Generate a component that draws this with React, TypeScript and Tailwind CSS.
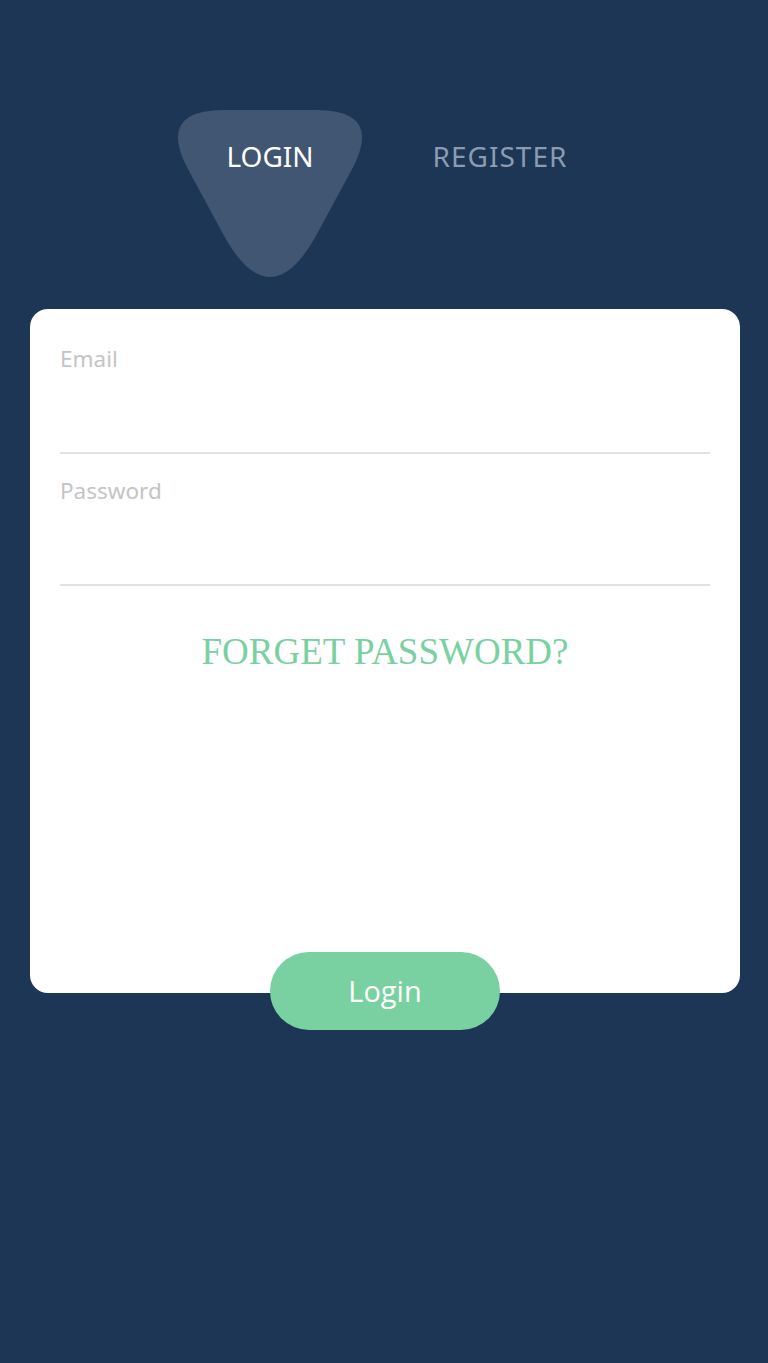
import React from 'react';

const fields = ['Email', 'Password'];

const App: React.FC = () => {
  return (
    <div className="min-h-[1363px] w-full bg-[#1d3656] font-['Noto_Sans',sans-serif]">
      {/* Tabs */}
      <div className="flex justify-center gap-[50px] pt-[142px] pl-[2px]">
        <div className="relative flex h-[28px] w-[180px] justify-center">
          <svg
            className="absolute left-[-30px] top-[-37px]"
            width="240"
            height="220"
            viewBox="0 0 240 220"
            aria-hidden="true"
          >
            <path
              d="M74 5 Q6 5 38.3 64.8 L72.5 128.1 Q120 216 167.5 128.1 L201.7 64.8 Q234 5 166 5 Z"
              fill="#415672"
            />
          </svg>
          <span className="relative text-[28px] leading-none text-white">LOGIN</span>
        </div>
        <div className="flex h-[28px] w-[180px] justify-center">
          <span className="text-[28px] leading-none tracking-[1px] text-[#8b9bb0]">REGISTER</span>
        </div>
      </div>

      <div className="ml-[30px] w-[710px]">
        {/* Card */}
        <div className="mt-[139px] h-[684px] rounded-[18px] bg-white px-[30px] pt-[35px]">
          {fields.map((name) => (
            <div key={name} className="mb-[22px] border-b-2 border-[#e2e2e2]">
              <div className="h-[30px] text-[22.5px] leading-[30px] text-[#c4c4c4]">{name}</div>
              <div className="h-[78px]" />
            </div>
          ))}
          <div className="mt-[47px] text-center font-['Liberation_Serif',serif] text-[37px] leading-none text-[#79d0a0]">
            FORGET PASSWORD?
          </div>
        </div>

        <div className="-mt-[41px] flex justify-center">
          <button className="h-[78px] w-[230px] rounded-full bg-[#79d0a0] font-['Open_Sans',sans-serif] text-[29px] text-white">
            Login
          </button>
        </div>
      </div>
    </div>
  );
};

export default App;
